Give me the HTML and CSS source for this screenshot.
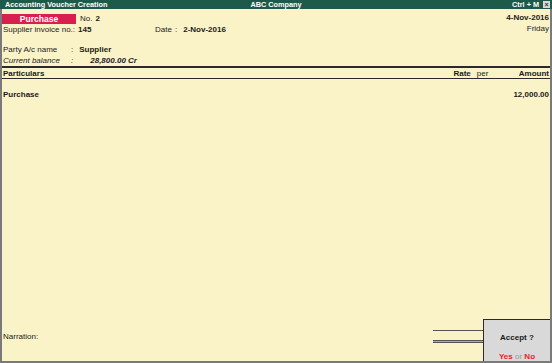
FILE: index.html
```html
<!DOCTYPE html>
<html lang="en">

<head>
    <meta charset="UTF-8">
    <meta name="viewport" content="width=device-width, initial-scale=1.0">
    <title>Accounting Voucher Creation</title>
    <link rel="stylesheet" href="styles.css">
</head>

<body>

    <!-- Верхняя полоса -->
    <div class="titlebar">
        <span class="title-left">Accounting Voucher Creation</span>
        <span class="title-center">ABC Company</span>
        <span class="title-right">Ctrl + M <span class="close-box">&#215;</span></span>
    </div>

    <div class="voucher">
        <!-- Шапка ваучера -->
        <div class="voucher-head">
            <div class="head-left">
                <div class="head-row">
                    <span class="badge">Purchase</span>
                    <span class="label">No.</span>
                    <span class="value">2</span>
                </div>
                <div class="head-row">
                    <span class="label inv-label">Supplier invoice no.:</span>
                    <span class="value inv-value">145</span>
                    <span class="label">Date</span>
                    <span class="colon">:</span>
                    <span class="value">2-Nov-2016</span>
                </div>
            </div>
            <div class="head-right">
                <div class="value">4-Nov-2016</div>
                <div class="label">Friday</div>
            </div>
        </div>

        <div class="party">
            <div class="head-row">
                <span class="label party-label">Party A/c name</span>
                <span class="colon">:</span>
                <span class="value">Supplier</span>
            </div>
            <div class="head-row balance">
                <span class="label party-label">Current balance</span>
                <span class="colon">:</span>
                <span class="value balance-value">28,800.00 Cr</span>
            </div>
        </div>

        <!-- Таблица -->
        <div class="table-head">
            <span class="col-particulars">Particulars</span>
            <span class="col-rate">Rate</span>
            <span class="col-per">per</span>
            <span class="col-amount">Amount</span>
        </div>

        <div class="entries">
            <div class="entry">
                <span class="col-particulars">Purchase</span>
                <span class="col-amount">12,000.00</span>
            </div>
        </div>

        <!-- Низ -->
        <div class="footer">
            <span class="narration">Narration:</span>
            <div class="total-lines">
                <div class="line-single"></div>
                <div class="line-double"></div>
            </div>
            <div class="accept">
                <div class="accept-title">Accept ?</div>
                <div class="accept-options"><span class="red">Yes</span> <span class="or">or</span> <span class="red">No</span></div>
            </div>
        </div>
    </div>

</body>

</html>
```

FILE: styles.css
```css
/* Основные стили */
body {
    margin: 0;
    width: 552px;
    height: 363px;
    display: flex;
    flex-direction: column;
    font-family: 'Liberation Sans', Arial, sans-serif;
    font-size: 8px;
    color: #1a1a1a;
    background: #faf3c8;
    overflow: hidden;
}

.titlebar {
    height: 9px;
    background: #1d5a49;
    color: #ffffff;
    font-weight: bold;
    font-size: 7.3px;
    display: flex;
    align-items: center;
    justify-content: space-between;
    padding: 0 2px 0 5px;
    position: relative;
}

.title-center {
    position: absolute;
    left: 0;
    right: 0;
    text-align: center;
    pointer-events: none;
}

.title-right {
    display: flex;
    align-items: center;
    gap: 4px;
}

.close-box {
    width: 7px;
    height: 7px;
    background: #d9d9d9;
    color: #333;
    font-size: 7px;
    line-height: 7px;
    text-align: center;
}

/* Область ваучера */
.voucher {
    flex: 1;
    display: flex;
    flex-direction: column;
    border-left: 2px solid #7a7a7a;
    border-right: 2px solid #7a7a7a;
    border-bottom: 2px solid #7a7a7a;
}

.voucher-head {
    display: flex;
    justify-content: space-between;
    padding-top: 4px;
}

.head-right {
    text-align: right;
    padding-right: 1px;
}

.head-right .label {
    margin-top: 2px;
}

.head-row {
    display: flex;
    align-items: center;
    height: 11px;
}

.badge {
    width: 74px;
    height: 10px;
    background: #d7204f;
    color: #ffffff;
    font-weight: bold;
    font-size: 8.5px;
    text-align: center;
    line-height: 10px;
    margin-right: 4px;
}

.label {
    color: #222;
}

.value {
    font-weight: bold;
    margin-left: 3px;
}

.inv-label {
    margin-left: 1px;
}

.inv-value {
    width: 77px;
}

.colon {
    margin: 0 3px;
}

.party {
    padding-top: 9px;
    padding-left: 1px;
}

.party-label {
    width: 65px;
}

.balance {
    font-style: italic;
}

.balance-value {
    margin-left: 14px;
}

/* Таблица */
.table-head {
    display: flex;
    align-items: center;
    height: 10px;
    border-top: 2px solid #2a2a2a;
    border-bottom: 1px solid #2a2a2a;
    font-weight: bold;
    padding-left: 1px;
}

.col-particulars {
    flex: 1;
    font-weight: bold;
}

.col-rate {
    font-weight: bold;
}

.col-per {
    font-weight: normal;
    width: 42px;
    margin-left: 6px;
}

.col-amount {
    font-weight: bold;
    text-align: right;
    padding-right: 1px;
}

.entries {
    flex: 1;
    padding-top: 11px;
    padding-left: 1px;
}

.entry {
    display: flex;
}

/* Низ */
.footer {
    display: flex;
    align-items: flex-end;
    height: 42px;
}

.narration {
    flex: 1;
    margin-left: 1px;
    margin-bottom: 20px;
}

.total-lines {
    width: 50px;
    margin-bottom: 18px;
}

.line-single {
    border-top: 1px solid #555;
    margin-bottom: 9px;
}

.line-double {
    border-top: 1px solid #555;
    border-bottom: 1px solid #555;
    height: 1px;
    background: #aaa;
}

.accept {
    width: 67px;
    height: 42px;
    background: #d9d9d9;
    border-left: 1px solid #2a2a2a;
    border-top: 1px solid #2a2a2a;
    text-align: center;
    display: flex;
    flex-direction: column;
    justify-content: space-between;
    box-sizing: border-box;
    padding: 13px 0 0;
}

.accept-title {
    font-weight: bold;
    font-size: 8px;
}

.accept-options {
    font-weight: bold;
}

.red {
    color: #e81c2c;
}

.or {
    color: #999;
    font-weight: normal;
}
```
